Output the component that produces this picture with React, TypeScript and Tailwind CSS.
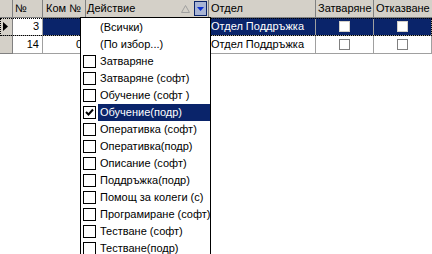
import React from "react";

const cols = "grid-cols-[13px_30px_43px_123px_107px_58px_58px]";

const items = [
  { label: "(Всички)", box: false },
  { label: "(По избор...)", box: false },
  { label: "Затваряне", box: true },
  { label: "Затваряне (софт)", box: true },
  { label: "Обучение (софт )", box: true },
  { label: "Обучение(подр)", box: true, checked: true, selected: true },
  { label: "Оперативка (софт)", box: true },
  { label: "Оперативка(подр)", box: true },
  { label: "Описание (софт)", box: true },
  { label: "Поддръжка(подр)", box: true },
  { label: "Помощ за колеги (с)", box: true },
  { label: "Програмиране (софт)", box: true },
  { label: "Тестване (софт)", box: true },
  { label: "Тестване(подр)", box: true },
];

const CheckCell = ({ selected }: { selected?: boolean }) => (
  <div
    className={`flex items-center justify-center border-r border-b border-[#a0a0a0] ${
      selected ? "bg-[#0a246a]" : "bg-white"
    }`}
  >
    <div
      className={`w-[11px] h-[11px] border ${
        selected ? "bg-white border-[#d4d0c8]" : "bg-white border-[#808080]"
      }`}
    />
  </div>
);

export default function App() {
  return (
    <div
      className="relative w-[432px] h-[254px] overflow-hidden bg-white text-[11px] text-black"
      style={{ fontFamily: '"Liberation Sans", Arial, sans-serif' }}
    >
      {/* Header */}
      <div className={`grid ${cols} h-[18px] bg-[#d4d0c8] border-b border-[#808080]`}>
        <div className="border-r border-[#808080]" />
        <div className="border-r border-[#808080] pl-[2px] leading-[17px]">№</div>
        <div className="border-r border-[#808080] pl-[3px] leading-[17px]">Ком №</div>
        <div className="border-r border-[#808080] pl-[1px] flex items-center">
          <span className="flex-1 leading-[17px]">Действие</span>
          <svg width="9" height="8" viewBox="0 0 9 8" className="mr-[4px]">
            <path d="M4.5 0.5 L8.5 7.5 L0.5 7.5 Z" fill="none" stroke="#a0a0a0" />
          </svg>
          <div className="w-[13px] h-[15px] mr-[1px] bg-[#a8b4d4] border border-[#0a246a] flex items-center justify-center">
            <svg width="7" height="4" viewBox="0 0 7 4">
              <path d="M0 0 L7 0 L3.5 4 Z" fill="#0a2fd0" />
            </svg>
          </div>
        </div>
        <div className="border-r border-[#808080] pl-[2px] leading-[17px]">Отдел</div>
        <div className="border-r border-[#808080] pl-[2px] leading-[17px]">Затваряне</div>
        <div className="pl-[2px] leading-[17px]">Отказване</div>
      </div>

      {/* Row 1 (selected) */}
      <div className={`grid ${cols} h-[18px] outline-1 outline-dotted outline-black -outline-offset-1`}>
        <div className="bg-[#d4d0c8] border-r border-b border-[#808080] flex items-center pl-[3px]">
          <svg width="5" height="9" viewBox="0 0 5 9">
            <path d="M0 0 L5 4.5 L0 9 Z" fill="#000" />
          </svg>
        </div>
        <div className="bg-white border-r border-b border-[#a0a0a0] text-right pr-[3px] leading-[17px]">3</div>
        <div className="bg-[#0a246a] border-r border-b border-[#a0a0a0]" />
        <div className="bg-[#0a246a] border-r border-b border-[#a0a0a0]" />
        <div className="bg-[#0a246a] text-white border-r border-b border-[#a0a0a0] pl-[2px] leading-[17px]">
          Отдел Поддръжка
        </div>
        <CheckCell selected />
        <CheckCell selected />
      </div>

      {/* Row 2 */}
      <div className={`grid ${cols} h-[18px]`}>
        <div className="bg-[#d4d0c8] border-r border-b border-[#808080]" />
        <div className="border-r border-b border-[#a0a0a0] text-right pr-[3px] leading-[17px]">14</div>
        <div className="border-r border-b border-[#a0a0a0] text-right pr-[3px] leading-[17px]">0</div>
        <div className="border-r border-b border-[#a0a0a0]" />
        <div className="border-r border-b border-[#a0a0a0] pl-[2px] leading-[17px]">Отдел Поддръжка</div>
        <CheckCell />
        <CheckCell />
      </div>

      {/* Filter dropdown */}
      <div className="absolute left-[80px] top-[17px] w-[131px] h-[250px] bg-white border border-black pt-[1px]">
        {items.map((it) => (
          <div key={it.label} className="flex items-center h-[17px]">
            <div className="w-[17px] flex justify-center shrink-0">
              {it.box && (
                <div className="w-[13px] h-[13px] border border-black bg-white flex items-center justify-center">
                  {it.checked && (
                    <svg width="9" height="9" viewBox="0 0 9 9">
                      <path d="M1 4 L3.5 6.5 L8 1.5" fill="none" stroke="#000" strokeWidth="2" />
                    </svg>
                  )}
                </div>
              )}
            </div>
            <div
              className={`flex-1 h-[17px] leading-[17px] pl-[2px] whitespace-nowrap ${
                it.selected ? "bg-[#0a246a] text-white" : ""
              }`}
            >
              {it.label}
            </div>
          </div>
        ))}
      </div>
    </div>
  );
}
